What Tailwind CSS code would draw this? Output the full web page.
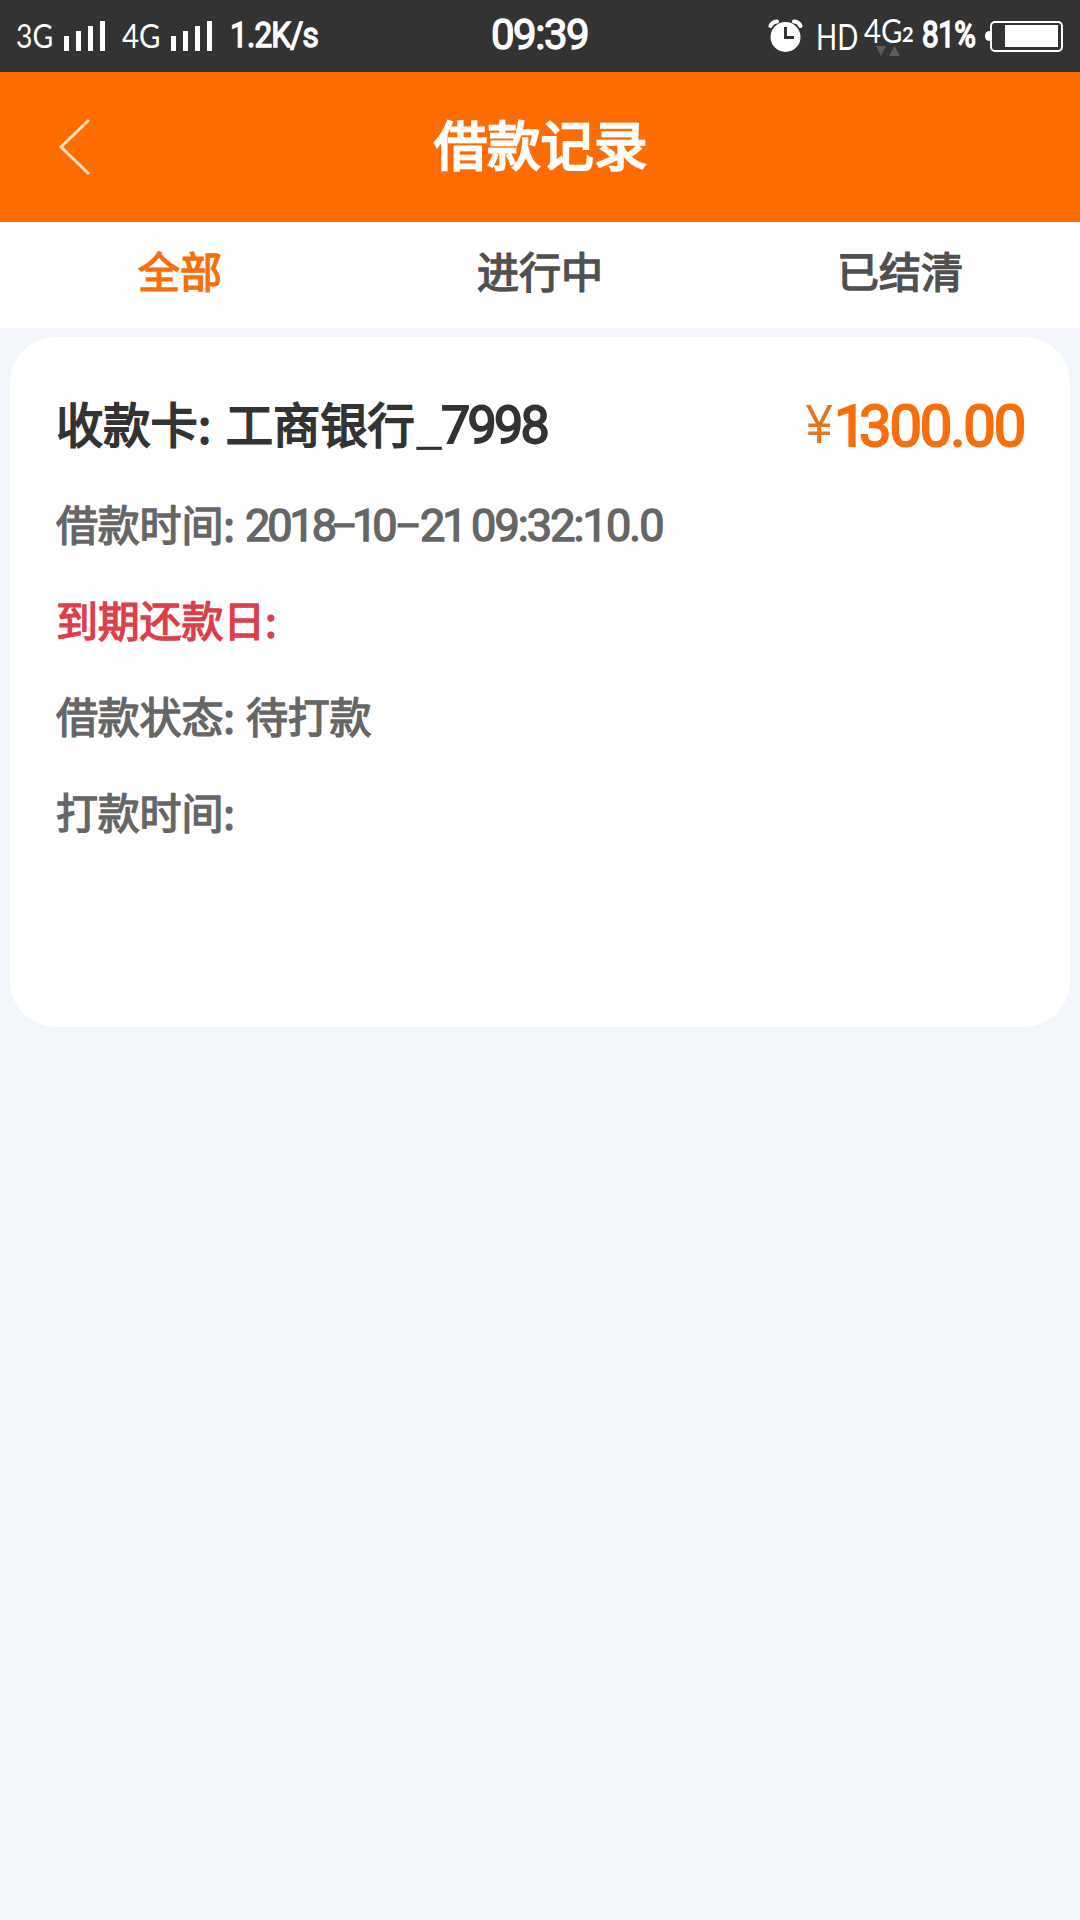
<!DOCTYPE html>
<html lang="zh-CN">
<head>
<meta charset="utf-8">
<meta name="viewport" content="width=device-width, initial-scale=1">
<title>借款记录</title>
<script src="https://cdn.jsdelivr.net/npm/@tailwindcss/browser@4"></script>
</head>
<body class="w-[1080px] h-[1920px] overflow-hidden bg-[#f2f5fa] font-['Noto_Sans_CJK_SC',sans-serif] whitespace-nowrap">
  <!-- status bar -->
  <div class="flex h-[72px] bg-[#333333] text-white leading-none">
    <span class="ml-[16px] mt-[19px] w-[48px] shrink-0 origin-left scale-x-[.86] font-['Lato',sans-serif] text-[33px]">3G</span>
    <svg class="mt-[21px] h-[30px] w-[41px] shrink-0" viewBox="0 0 41 30" fill="#fff"><path d="M0 15h5v15H0zM12 10h5v20h-5zM24 5h5v25h-5zM36 0h5v30h-5z"/></svg>
    <span class="ml-[17px] mt-[19px] w-[49px] shrink-0 origin-left scale-x-[.89] font-['Lato',sans-serif] text-[33px]">4G</span>
    <svg class="mt-[21px] h-[30px] w-[41px] shrink-0" viewBox="0 0 41 30" fill="#fff"><path d="M0 15h5v15H0zM12 10h5v20h-5zM24 5h5v25h-5zM36 0h5v30h-5z"/></svg>
    <span class="ml-[18px] mt-[18px] w-[261px] shrink-0 origin-left scale-x-[.9] font-['Roboto',sans-serif] text-[35px] tracking-[-0.9px] [-webkit-text-stroke:1.4px_#fff]">1.2K/s</span>
    <span class="mt-[14px] w-[277px] shrink-0 font-['Roboto',sans-serif] text-[42px] tracking-[-1.5px] [-webkit-text-stroke:1.3px_#fff]">09:39</span>
    <svg class="mt-[19px] h-[34px] w-[36px] shrink-0" viewBox="0 0 36 34"><circle cx="17.5" cy="18" r="15" fill="#fff"/><path d="M2.500 7Q4 3 9 2.500M32.500 7Q31 3 26 2.500" fill="none" stroke="#fff" stroke-width="4" stroke-linecap="round"/><path d="M17.500 8v10.500h8.500" fill="none" stroke="#333" stroke-width="3"/></svg>
    <span class="ml-[12px] mt-[18px] w-[48px] shrink-0 origin-left scale-x-[.77] font-['Lato',sans-serif] text-[36px]">HD</span>
    <div class="w-[58px] shrink-0 mt-[14px]">
      <div class="flex h-[32px]">
        <span class="w-[38px] origin-left scale-x-[.89] font-['Lato',sans-serif] text-[33px]">4G</span>
        <span class="mt-[10px] font-['Lato',sans-serif] font-bold text-[20px]">2</span>
      </div>
      <svg class="ml-[12px] h-[10px] w-[26px]" viewBox="0 0 26 10" fill="#5c5c5c"><path d="M0 0h10L5 10zM13 10h11L18.500 0z"/></svg>
    </div>
    <span class="mt-[17px] w-[63px] shrink-0 origin-left scale-x-[.82] font-['Roboto',sans-serif] text-[36px] tracking-[-0.5px] [-webkit-text-stroke:1.7px_#fff]">81%</span>
    <svg class="mt-[20px] h-[32px] w-[78px] shrink-0" viewBox="0 0 78 32" fill="#fff"><path d="M5 11v10Q0 21 0 16T5 11"/><rect x="6" y="2" width="71" height="29" rx="4" fill="none" stroke="#fff" stroke-width="2"/><path d="M20 5h53v22H20z"/></svg>
  </div>

  <!-- header -->
  <header class="flex h-[150px] items-center bg-[#ff6d02]">
    <svg class="ml-[58px] h-[58px] w-[36px]" viewBox="0 0 36 58" fill="none" stroke="#ffe3c4" stroke-width="3"><path d="M31 2L3 29L31 56"/></svg>
    <h1 class="ml-[340px] mb-[9px] text-[53.300px] leading-none text-white [-webkit-text-stroke:2.3px_#fff]">借款记录</h1>
  </header>

  <!-- tabs -->
  <nav class="grid h-[106px] grid-cols-3 bg-white pt-[27px] text-center text-[42px] leading-[42px] text-[#505050] [-webkit-text-stroke:1.5px_#505050]">
    <span class="text-[#f76f0d] [-webkit-text-stroke:1.5px_#f76f0d]">全部</span>
    <span>进行中</span>
    <span>已结清</span>
  </nav>

  <!-- loan record -->
  <section class="mx-[10px] mt-[9px] h-[690px] rounded-[46px] bg-white pl-[46px] pr-[46px] pt-[42px] text-[42px] leading-[96px] text-[#666666] [-webkit-text-stroke:1.4px_#666666]">
    <div class="flex h-[96px] leading-[88px]">
      <span class="w-[360px] shrink-0 text-[47.300px] text-[#333333] [word-spacing:4px] [-webkit-text-stroke:1.8px_#333333]">收款卡: 工商银行</span>
      <span class="w-[25px] shrink-0 text-[47px] text-[#333333] [-webkit-text-stroke:0.5px_#333333]">_</span>
      <span class="w-[365px] shrink-0 translate-y-[3px] font-['Roboto',sans-serif] text-[52px] tracking-[-2.7px] text-[#333333] [-webkit-text-stroke:1.8px_#333333]">7998</span>
      <span class="w-[28px] shrink-0 origin-left translate-y-[1px] scale-x-[.86] font-['Liberation_Sans',sans-serif] text-[55px] text-[#e4751f] [-webkit-text-stroke:0px]">¥</span>
      <span class="w-[25px] shrink-0 translate-y-[3px] font-['Roboto',sans-serif] text-[58px] text-[#f76f0d] [-webkit-text-stroke:2px_#f76f0d]">1</span>
      <span class="translate-y-[3px] font-['Roboto',sans-serif] text-[58px] tracking-[-2.200px] text-[#f76f0d] [-webkit-text-stroke:2px_#f76f0d]">300.00</span>
    </div>
    <div class="flex h-[96px]">
      <span class="w-[189px] shrink-0 tracking-[-0.2px]">借款时间:</span>
      <div class="flex translate-y-[3px] font-['Roboto',sans-serif] text-[45px] [-webkit-text-stroke:1.4px_#666666]">
        <span class="w-[88px] shrink-0 tracking-[-3px]">2018</span>
        <span class="w-[19px] shrink-0 origin-left -translate-y-[2px] scale-x-[1.8] [-webkit-text-stroke:1px_#666666]">-</span>
        <span class="w-[45px] shrink-0 tracking-[-5px]">10</span>
        <span class="w-[23px] shrink-0 origin-left -translate-y-[2px] scale-x-[1.8] [-webkit-text-stroke:1px_#666666]">-</span>
        <span class="w-[51px] shrink-0 tracking-[-3px]">21</span>
        <span class="tracking-[-1.9px]">09:32:10.0</span>
      </div>
    </div>
    <div class="h-[96px] tracking-[-0.2px] text-[#dd3e49] [-webkit-text-stroke:1.4px_#dd3e49]">到期还款日:</div>
    <div class="h-[96px] tracking-[-0.2px] [word-spacing:2px]">借款状态: 待打款</div>
    <div class="h-[96px] tracking-[-0.2px]">打款时间:</div>
  </section>
</body>
</html>
